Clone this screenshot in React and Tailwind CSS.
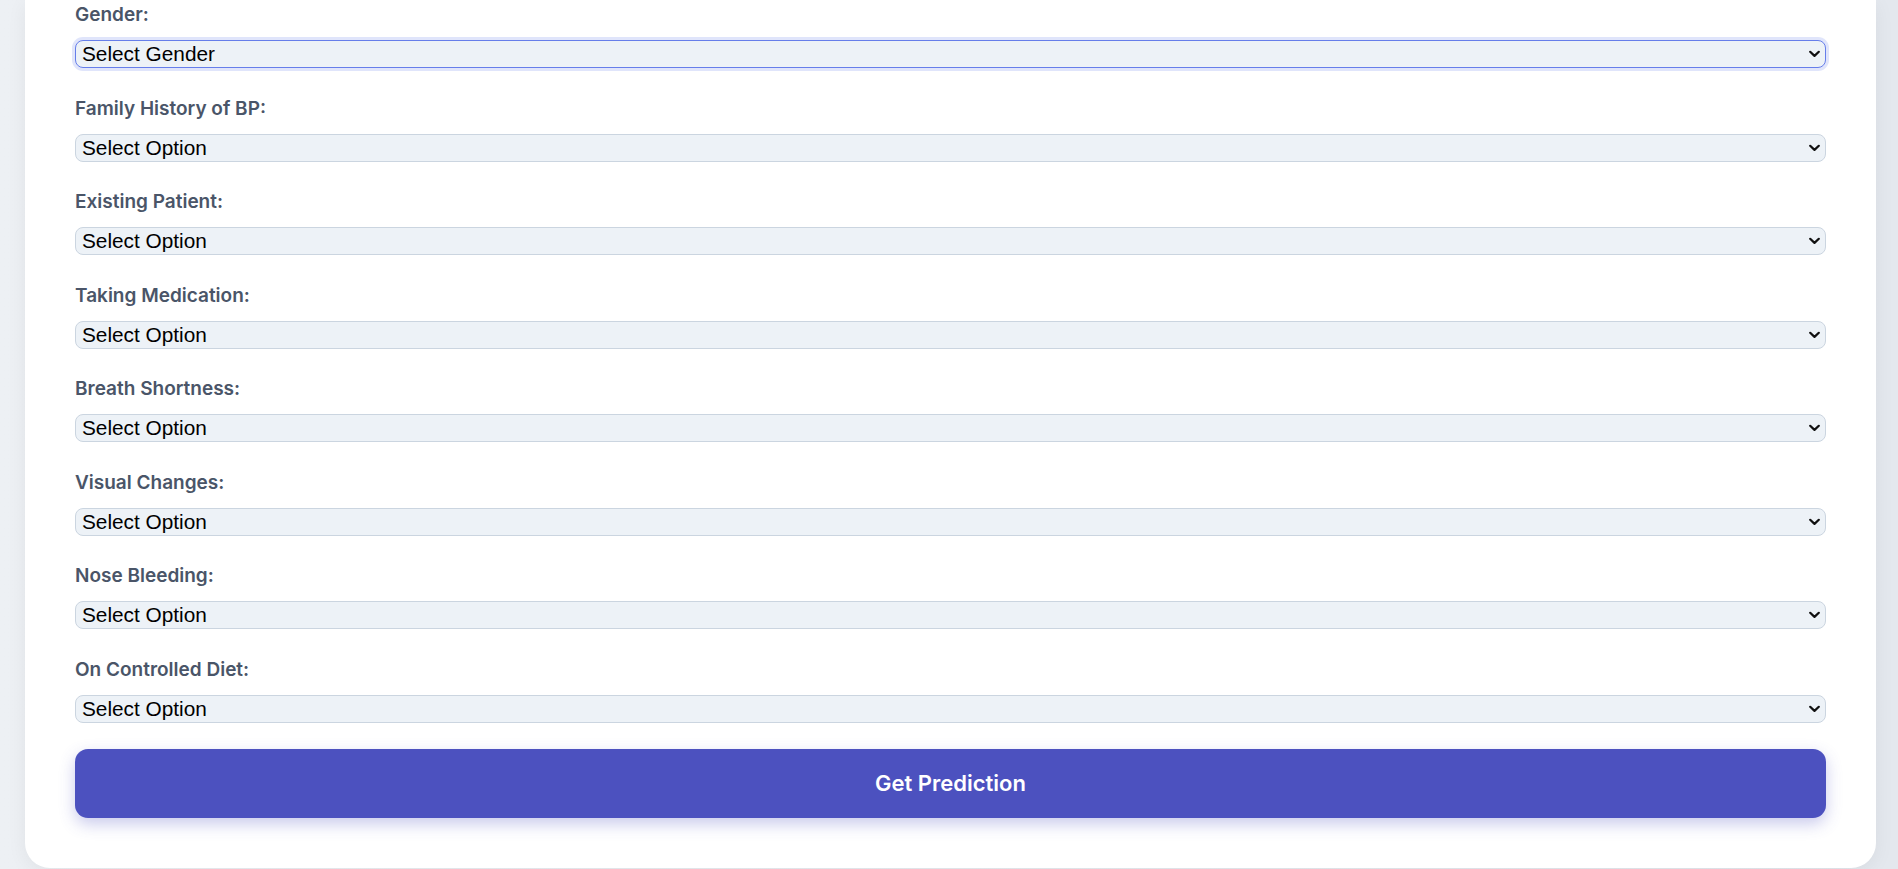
import React from "react";

const fields = [
  { label: "Gender:", placeholder: "Select Gender", focused: true },
  { label: "Family History of BP:", placeholder: "Select Option" },
  { label: "Existing Patient:", placeholder: "Select Option" },
  { label: "Taking Medication:", placeholder: "Select Option" },
  { label: "Breath Shortness:", placeholder: "Select Option" },
  { label: "Visual Changes:", placeholder: "Select Option" },
  { label: "Nose Bleeding:", placeholder: "Select Option" },
  { label: "On Controlled Diet:", placeholder: "Select Option" },
];

function Chevron() {
  return (
    <svg
      className="pointer-events-none absolute right-[6px] top-1/2 -translate-y-1/2"
      width="11"
      height="7"
      viewBox="0 0 11 7"
      fill="none"
    >
      <path d="M1.2 1.2 L5.5 5.4 L9.8 1.2" stroke="#111" strokeWidth="2.2" strokeLinecap="round" strokeLinejoin="round" />
    </svg>
  );
}

export default function App() {
  return (
    <div className="min-h-[869px] w-full bg-gradient-to-r from-[#edf0f4] to-[#e4e8ee] overflow-hidden">
      <div className="ml-[25px] w-[1851px] bg-white rounded-b-[25px] shadow-[0_4px_20px_rgba(0,0,0,0.06)] px-[50px] pb-[50px] pt-px">
        <div className="flex flex-col gap-[26.5px]">
          {fields.map((f) => (
            <div key={f.label} className="flex flex-col">
              <label className="block font-['Inter',sans-serif] text-[19px] leading-[27px] font-semibold text-[#4a5568] mb-[12px]">
                {f.label}
              </label>
              <div className="relative">
                <select
                  defaultValue=""
                  className={
                    f.focused
                      ? "appearance-none block h-[28px] w-full rounded-[8px] border border-[#667eea] bg-[#edf2f7] pl-[6px] pr-[24px] font-['Liberation_Sans',Arial,sans-serif] text-[20.8px] leading-[26px] text-black outline-none shadow-[0_0_0_3px_rgba(102,126,234,0.2)]"
                      : "appearance-none block h-[28px] w-full rounded-[8px] border border-[#cbd5e0] bg-[#edf2f7] pl-[6px] pr-[24px] font-['Liberation_Sans',Arial,sans-serif] text-[20.8px] leading-[26px] text-black outline-none"
                  }
                >
                  <option value="">{f.placeholder}</option>
                  <option value="1">Yes</option>
                  <option value="0">No</option>
                </select>
                <Chevron />
              </div>
            </div>
          ))}
          <button className="h-[69px] w-full rounded-[13px] bg-[#4c51bf] text-white font-['Inter',sans-serif] font-semibold text-[22px] shadow-[0_6px_16px_rgba(76,81,191,0.3)]">
            Get Prediction
          </button>
        </div>
      </div>
    </div>
  );
}
